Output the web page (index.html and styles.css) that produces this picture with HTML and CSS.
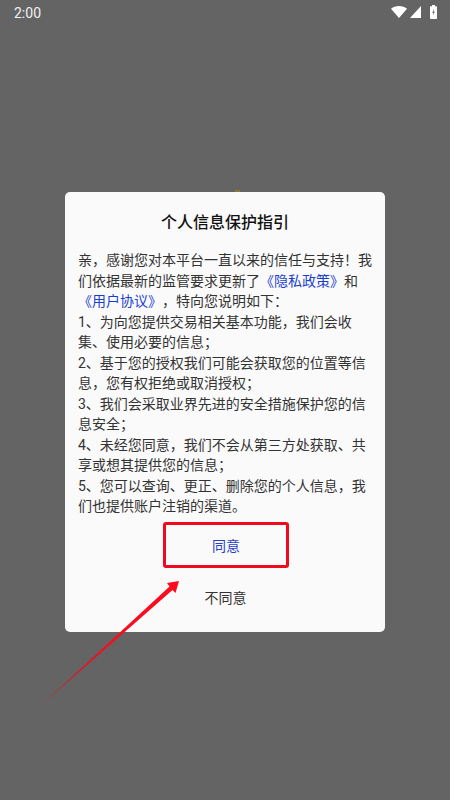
FILE: index.html
```
<!DOCTYPE html>
<html lang="zh">
<head>
<meta charset="utf-8">
<title>个人信息保护指引</title>
<link rel="stylesheet" href="styles.css">
</head>
<body>
<div class="screen">
  <header class="status">
    <span class="time">2:00</span>
    <span class="icons">
      <svg width="16" height="12" viewBox="0 0 16 12"><path d="M0 2.800C2.200 1 5 0 8 0s5.800 1 8 2.800L8 12z" fill="#fff"/></svg>
      <svg width="11" height="12" viewBox="0 0 11 12"><path d="M11 0V12H0z" fill="#fff"/></svg>
      <svg class="batt" width="7" height="14" viewBox="0 0 7 14"><path fill-rule="evenodd" d="M2 0h3v1.200h1.200a.8.8 0 0 1 .8.8v11.200a.8.8 0 0 1-.8.8H.8a.8.8 0 0 1-.8-.8V2a.8.8 0 0 1 .8-.8H2zM4 4 2.200 7.800h1.200L3 10.500l1.800-3.800H3.600z" fill="#fff"/></svg>
    </span>
  </header>
  <main class="center">
    <section class="dialog">
      <span class="speck"></span>
      <h1 class="title">个人信息保护指引</h1>
      <p class="body">亲，感谢您对本平台一直以来的信任与支持！我们依据最新的监管要求更新了<a class="link">《隐私政策》</a>和<br><a class="link">《用户协议》</a>，特向您说明如下：<br>1、为向您提供交易相关基本功能，我们会收集、使用必要的信息；<br>2、基于您的授权我们可能会获取您的位置等信息，您有权拒绝或取消授权；<br>3、我们会采取业界先进的安全措施保护您的信息安全；<br>4、未经您同意，我们不会从第三方处获取、共享或想其提供您的信息；<br>5、您可以查询、更正、删除您的个人信息，我们也提供账户注销的渠道。</p>
      <div class="agree"><span class="agree-text">同意</span></div>
      <div class="disagree">不同意</div>
    </section>
  </main>
  <svg class="arrow" width="450" height="800" viewBox="0 0 450 800">
    <defs>
      <linearGradient id="fade" gradientUnits="userSpaceOnUse" x1="38" y1="708" x2="178" y2="582">
        <stop offset="0" stop-color="#e01020" stop-opacity="0.25"/>
        <stop offset="0.25" stop-color="#e01020" stop-opacity="0.85"/>
        <stop offset="0.5" stop-color="#f01020"/>
        <stop offset="1" stop-color="#ff0a1e"/>
      </linearGradient>
    </defs>
    <path d="M37 709 169.500 586.500 167 583 179 581 175.500 593 172.500 590z" fill="url(#fade)"/>
  </svg>
</div>
</body>
</html>
```
FILE: styles.css
```
* { box-sizing: border-box; }
html, body { margin: 0; padding: 0; }
body { font-family: "Roboto", "Noto Sans CJK SC", sans-serif; }
.screen {
  position: relative;
  width: 450px;
  height: 800px;
  background: #646464;
  overflow: hidden;
  display: flex;
  flex-direction: column;
}
.status {
  height: 24px;
  padding: 0 13px 0 14px;
  display: flex;
  align-items: center;
  justify-content: space-between;
  color: #f0f0f0;
}
.time { font-size: 14px; margin-top: 1px; }
.icons { display: flex; align-items: center; gap: 3px; }
.batt { margin-left: 6px; }
.center {
  padding: 168px 65px 0;
}
.dialog {
  position: relative;
  width: 320px;
  height: 440px;
  background: #fafafa;
  border-radius: 5px;
  padding: 20px 13px 0;
  display: flex;
  flex-direction: column;
  align-items: stretch;
}
.speck {
  position: absolute;
  left: 170px;
  top: -2px;
  width: 5px;
  height: 2px;
  background: #8a7a3a;
}
.title {
  margin: 0;
  font-size: 16px;
  font-weight: 500;
  line-height: 22px;
  color: #111;
  text-align: center;
}
.body {
  margin: 16px 0 0;
  width: 295px;
  font-size: 14px;
  line-height: 20.5px;
  color: #333;
  text-spacing-trim: space-all;
}
.link { color: #1a3fd0; }
.agree {
  margin: 5px 0 0 85px;
  width: 126px;
  height: 46px;
  border: 3px solid #f00a1e;
  border-radius: 3px;
  display: flex;
  align-items: center;
  justify-content: center;
}
.agree-text { font-size: 14px; color: #2a3fc8; }
.disagree {
  margin: 18px 0 0 0;
  font-size: 14px;
  line-height: 24px;
  color: #333;
  text-align: center;
  padding-left: 1px;
}
.arrow { position: absolute; left: 0; top: 0; pointer-events: none; }
```
